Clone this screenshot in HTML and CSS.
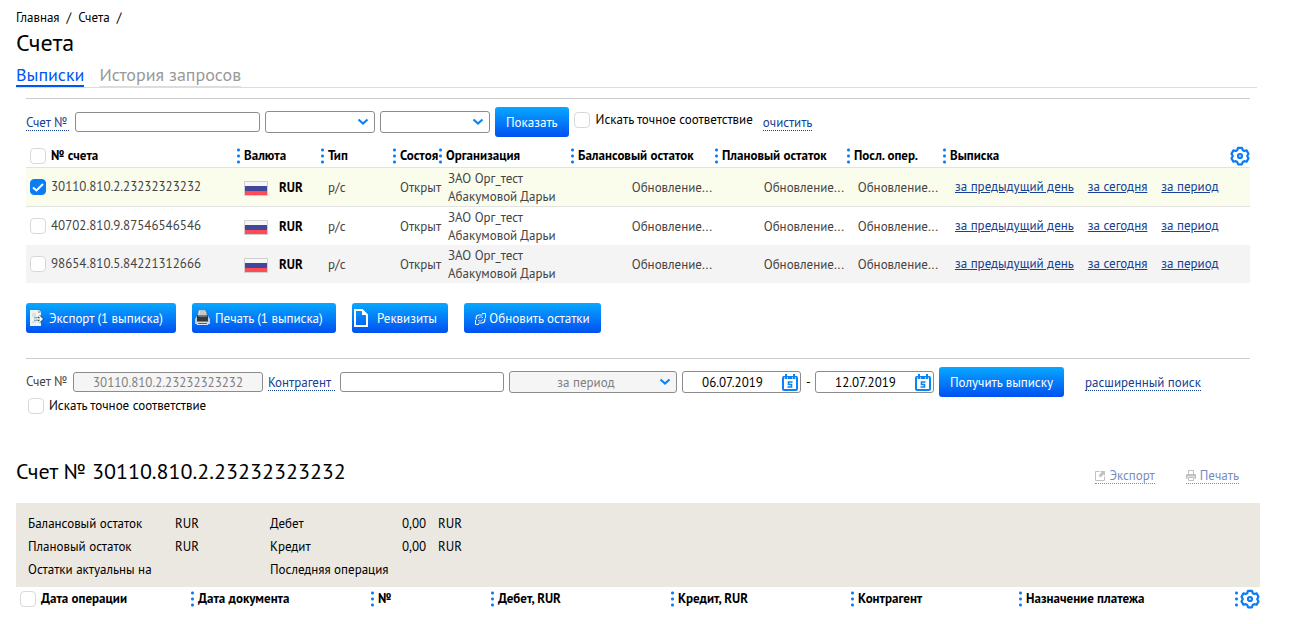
FILE: index.html
```html
<!DOCTYPE html>
<html lang="ru">
<head>
<meta charset="utf-8">
<title>Счета</title>
<link rel="stylesheet" href="styles.css">
</head>
<body>
<svg class="sprite" aria-hidden="true">
  <symbol id="gear" viewBox="0 0 20 20">
    <path d="M8 1.8h4l.7 2.3 1.5.9 2.4-.6 1.9 3.3-1.3 2.3 1.3 2.4-1.9 3.3-2.4-.6-1.5.9-.7 2.3H8l-.7-2.3-1.5-.9-2.4.6-1.9-3.3L2.8 10 1.500 7.700l1.9-3.3 2.400.6 1.500-.9z" fill="none" stroke="#0a7cf5" stroke-width="2.200" stroke-linejoin="round"/>
    <circle cx="10" cy="10" r="2" fill="none" stroke="#0a7cf5" stroke-width="2.200"/>
  </symbol>
  <symbol id="flag" viewBox="0 0 24 15">
    <rect width="24" height="15" rx="1" fill="#cfcfcf"/>
    <path d="M1 1h22v4H1z" fill="#f6f6f6"/><path d="M1 5h22v5H1z" fill="#41479b"/><path d="M1 10h22v4H1z" fill="#ff4b55"/>
  </symbol>
  <symbol id="calendar" viewBox="0 0 16 17">
    <rect x="1" y="3" width="14" height="13" rx="1" fill="#fff" stroke="#0a84f5" stroke-width="2"/>
    <path d="M1 2h14v3H1z" fill="#0a84f5"/>
    <path d="M4 0v5M12 0v5" stroke="#0a84f5" stroke-width="2"/>
    <path d="M2.500 3v2.500h3V3M10.500 3v2.500h3V3" stroke="#fff" stroke-width=".6" fill="none"/>
    <path d="M10.500 8H6.500v2.500h3V13H5.500" fill="none" stroke="#0a84f5" stroke-width="1.600"/>
  </symbol>
</svg>

<main class="page">
  <nav class="crumbs"><a href="#">Главная</a><span>/</span><a href="#">Счета</a><span>/</span></nav>
  <h1 class="title title-main">Счета</h1>
  <nav class="tabs">
    <a class="tab tab-active" href="#">Выписки</a>
    <a class="tab" href="#">История запросов</a>
  </nav>

  <section class="section">
    <form class="filter">
      <label class="hint label-account" for="account">Счет №</label>
      <input class="field field-account" id="account" type="text">
      <select class="select select-short" aria-label="Валюта"><option></option></select>
      <select class="select select-short" aria-label="Состояние"><option></option></select>
      <button class="button" type="button">Показать</button>
      <label class="check-label"><input class="check" type="checkbox">Искать точное соответствие</label>
      <a class="hint" href="#">очистить</a>
    </form>

    <table class="grid accounts">
      <colgroup>
        <col class="w210"><col class="w84"><col class="w72"><col class="w46"><col class="w132"><col class="w144"><col class="w132"><col class="w96"><col>
      </colgroup>
      <thead>
        <tr>
          <th><div class="head head-first"><input class="check" type="checkbox" aria-label="Выбрать все">№ счета</div></th>
          <th><div class="head dots">Валюта</div></th>
          <th><div class="head dots">Тип</div></th>
          <th><div class="head dots">Состоя</div></th>
          <th><div class="head dots">Организация</div></th>
          <th><div class="head dots">Балансовый остаток</div></th>
          <th><div class="head dots">Плановый остаток</div></th>
          <th><div class="head dots">Посл. опер.</div></th>
          <th><div class="head dots">Выписка<button class="icon-button" type="button" aria-label="Настройка"><svg width="20" height="20"><use href="#gear"/></svg></button></div></th>
        </tr>
      </thead>
      <tbody>
        <tr class="selected">
          <td><label class="account"><input class="check" type="checkbox" checked>30110.810.2.23232323232</label></td>
          <td><div class="currency"><svg width="24" height="15"><use href="#flag"/></svg>RUR</div></td>
          <td class="kind">р/с</td><td class="kind">Открыт</td>
          <td class="org">ЗАО Орг_тест Абакумовой Дарьи</td>
          <td class="amount">Обновление...</td><td class="amount">Обновление...</td><td class="amount amount-last">Обновление...</td>
          <td><div class="links"><a href="#">за предыдущий день</a><a href="#">за сегодня</a><a href="#">за период</a></div></td>
        </tr>
        <tr>
          <td><label class="account"><input class="check" type="checkbox">40702.810.9.87546546546</label></td>
          <td><div class="currency"><svg width="24" height="15"><use href="#flag"/></svg>RUR</div></td>
          <td class="kind">р/с</td><td class="kind">Открыт</td>
          <td class="org">ЗАО Орг_тест Абакумовой Дарьи</td>
          <td class="amount">Обновление...</td><td class="amount">Обновление...</td><td class="amount amount-last">Обновление...</td>
          <td><div class="links"><a href="#">за предыдущий день</a><a href="#">за сегодня</a><a href="#">за период</a></div></td>
        </tr>
        <tr class="striped">
          <td><label class="account"><input class="check" type="checkbox">98654.810.5.84221312666</label></td>
          <td><div class="currency"><svg width="24" height="15"><use href="#flag"/></svg>RUR</div></td>
          <td class="kind">р/с</td><td class="kind">Открыт</td>
          <td class="org">ЗАО Орг_тест Абакумовой Дарьи</td>
          <td class="amount">Обновление...</td><td class="amount">Обновление...</td><td class="amount amount-last">Обновление...</td>
          <td><div class="links"><a href="#">за предыдущий день</a><a href="#">за сегодня</a><a href="#">за период</a></div></td>
        </tr>
      </tbody>
    </table>

    <div class="actions">
      <button class="button action w150" type="button">
        <svg width="16" height="16" viewBox="0 0 16 16"><path d="M1 0h9l2 2v14H1z" fill="#eef4f2"/><path d="M9 0v3h3z" fill="#9fb4ba"/><path d="M3 4h4M3 6h4M3 12h4" stroke="#c4d0d0"/><path d="M5 9h8M10 6l3 3-3 3" fill="none" stroke="#2f5a74" stroke-width="3"/><path d="M5 9h8M10 6l3 3-3 3" fill="none" stroke="#fff" stroke-width="1.400"/></svg>
        Экспорт (1 выписка)</button>
      <button class="button action w144" type="button">
        <svg width="16" height="16" viewBox="0 0 16 16"><path d="M3.500 0h7l2 6h-10z" fill="#e6eef2" stroke="#56616a" stroke-width=".6"/><path d="M5 2h5M4.500 4h7" stroke="#97a5ad"/><path d="M2 6h11l2 3v5H0V9z" fill="#c2ccd1"/><path d="M2 5.500h11v6H2z" fill="#33383d"/><path d="M3.500 6.500h8" stroke="#6a737a"/><path d="M1 12.500h13l-1 2.500H2z" fill="#dde4e7"/><path d="M3 13.500h9" stroke="#59636a"/></svg>
        Печать (1 выписка)</button>
      <button class="button action action-wide w96" type="button">
        <svg width="16" height="20" viewBox="0 0 16 20"><path d="M2 2h7l5 5v11H2z" fill="none" stroke="#fff" stroke-width="2"/><path d="M9 1v6h6z" fill="#fff"/></svg>
        Реквизиты</button>
      <button class="button action action-center w137" type="button">
        <svg width="11" height="12" viewBox="0 0 11 12"><path d="M1.200 6.500V5q0-3 3-3h3.300M9.800 5.500V7q0 3-3 3H3.500" fill="none" stroke="#f5f0e8" stroke-width="1.200"/><path d="M3.500 5.500q.5-1.500 2-1.500h1.500l1 1M7.500 6.500q-.5 1.500-2 1.500H4L3 7" fill="none" stroke="#f5f0e8" stroke-width=".8"/><path d="M7 .5h3.500V5M4 11.500H.5V7" fill="none" stroke="#f5f0e8"/></svg>
        Обновить остатки</button>
    </div>
  </section>

  <section class="section section-search">
    <form class="filter">
      <label class="label-account plain" for="account2">Счет №</label>
      <input class="field field-number" id="account2" type="text" value="30110.810.2.23232323232" disabled>
      <label class="hint label-party" for="party">Контрагент</label>
      <input class="field field-party" id="party" type="text">
      <select class="select select-period" aria-label="Период" disabled><option>за период</option></select>
      <div class="date"><input type="text" value="06.07.2019" aria-label="Дата с"><button class="icon-button" type="button" aria-label="Выбрать дату начала"><svg width="16" height="17"><use href="#calendar"/></svg></button></div>
      <span class="dash">-</span>
      <div class="date"><input type="text" value="12.07.2019" aria-label="Дата по"><button class="icon-button" type="button" aria-label="Выбрать дату окончания"><svg width="16" height="17"><use href="#calendar"/></svg></button></div>
      <button class="button" type="button">Получить выписку</button>
      <a class="hint advanced" href="#">расширенный поиск</a>
    </form>
    <label class="check-label exact"><input class="check" type="checkbox">Искать точное соответствие</label>
  </section>

  <header class="statement">
    <h2 class="title">Счет № 30110.810.2.23232323232</h2>
    <div class="tools">
      <a class="hint" href="#"><svg width="10" height="10" viewBox="0 0 10 10"><path d="M4.500.5h-4v9h9v-4" fill="none" stroke="#999"/><path d="M5 0h5v5L8.500 3.500 5.500 6.500 3.500 4.500 6.500 1.500z" fill="#999"/></svg>Экспорт</a>
      <a class="hint" href="#"><svg width="10" height="11" viewBox="0 0 10 11"><path d="M2.500 4V.5h5V4M2.500 7.500h5v3h-5z" fill="none" stroke="#999"/><path d="M0 5q0-1 1-1h8q1 0 1 1v4H8.500V6.500h-7V9H0z" fill="#999"/></svg>Печать</a>
    </div>
  </header>

  <section class="summary">
    <table class="totals">
      <colgroup><col class="w147"><col class="w95"><col class="w132"><col class="w36"><col class="w36"></colgroup>
      <tr><td>Балансовый остаток</td><td>RUR</td><td>Дебет</td><td>0,00</td><td>RUR</td></tr>
      <tr><td>Плановый остаток</td><td>RUR</td><td>Кредит</td><td>0,00</td><td>RUR</td></tr>
      <tr><td>Остатки актуальны на</td><td></td><td>Последняя операция</td><td></td><td></td></tr>
    </table>
  </section>

  <table class="grid operations">
    <colgroup><col class="w174"><col class="w180"><col class="w120"><col class="w180"><col class="w180"><col class="w168"><col><col class="w26"></colgroup>
    <thead>
      <tr>
        <th><div class="head head-first"><input class="check" type="checkbox" aria-label="Выбрать все операции">Дата операции</div></th>
        <th><div class="head dots">Дата документа</div></th>
        <th><div class="head dots">№</div></th>
        <th><div class="head dots">Дебет, RUR</div></th>
        <th><div class="head dots">Кредит, RUR</div></th>
        <th><div class="head dots">Контрагент</div></th>
        <th><div class="head dots">Назначение платежа</div></th>
        <th><div class="head dots dots-tight"><button class="icon-button" type="button" aria-label="Настройка столбцов"><svg width="20" height="20"><use href="#gear"/></svg></button></div></th>
      </tr>
    </thead>
  </table>
</main>
</body>
</html>
```
FILE: styles.css
```css
* { box-sizing: border-box; }

body {
  margin: 0;
  background: #fff;
  color: #000;
  font: 13px/18px "PT Sans", "Noto Sans", sans-serif;
}

input, select, button { font: inherit; margin: 0; }
svg { display: block; flex: none; }
.sprite { position: absolute; width: 0; height: 0; }

.page { padding: 8px 35px 14px 16px; }

.crumbs { display: flex; gap: 7px; line-height: 20px; }
.crumbs a { color: #000; text-decoration: none; }

.title { margin: 0; font-size: 22px; line-height: 32px; font-weight: 400; }
.title-main { font-size: 24px; line-height: 30px; }

.tabs {
  display: flex;
  gap: 15px;
  margin-right: 3px;
  padding-top: 7px;
  border-bottom: 1px solid #ddd;
}
.tab { color: #999; font-size: 18px; line-height: 20px; text-decoration: none; border-bottom: 1px solid #ddd; }
.tab-active { color: #0055f5; border-bottom: 2px solid #0055f5; }

.section { margin: 10px 10px 0; border-top: 1px solid #ccc; }

.filter { display: flex; align-items: center; gap: 5px; padding-top: 8px; }
.label-account { width: 43px; white-space: nowrap; }
.label-party { width: 67px; }
.plain { width: 42px; color: #444; }
.hint { padding-top: 2px; color: #164194; text-decoration: none; border-bottom: 1px dotted #164194; line-height: 14px; white-space: nowrap; }

.field, .select, .date {
  height: 22px;
  border: 1px solid #8c8c8c;
  border-radius: 3px;
  background-color: #fff;
}
.field { height: 20px; padding: 0 8px; }
.field:disabled, .select:disabled { background-color: #f5f5f5; color: #808080; opacity: 1; text-align: center; text-align-last: center; }
.field-account { width: 185px; margin-left: 1px; }
.field-number { width: 190px; }
.field-party { width: 164px; }
.select {
  appearance: none;
  padding: 2px 18px 0 4px;
  background-image: url("data:image/svg+xml,%3Csvg xmlns='http://www.w3.org/2000/svg' width='12' height='8'%3E%3Cpath d='M1.500 1.500 6 5.500l4.500-4' fill='none' stroke='%230a84f5' stroke-width='2.200'/%3E%3C/svg%3E");
  background-repeat: no-repeat;
  background-position: right 5px center;
}
.select-short { width: 110px; }
.select-period { width: 168px; }

.date { display: flex; align-items: center; width: 119px; padding-right: 2px; }
.date input { flex: 1; min-width: 0; padding: 2px 0 0; border: 0; background: none; text-align: center; }
.dash { width: 4px; }

.button {
  height: 30px;
  padding: 2px 11px 0;
  border: 0;
  border-radius: 3px;
  background: linear-gradient(#08a8ff, #0050f0);
  color: #fff;
  white-space: nowrap;
}
.icon-button { padding: 0; border: 0; background: none; }

.check {
  appearance: none;
  flex: none;
  width: 16px;
  height: 16px;
  border: 1px solid #d9d9d9;
  border-radius: 4px;
  background: #fff;
}
.check:checked {
  border-color: #0a7cf5;
  background: #0a7cf5 url("data:image/svg+xml,%3Csvg xmlns='http://www.w3.org/2000/svg' width='14' height='14'%3E%3Cpath d='M2 7.500 5.500 10.500 12 4' fill='none' stroke='white' stroke-width='2'/%3E%3C/svg%3E") center no-repeat;
}
.check-label { display: flex; align-items: center; gap: 6px; padding: 0 5px 4px 0; white-space: nowrap; }
.exact { width: max-content; padding: 0 0 0 2px; gap: 5px; }

.grid { width: 100%; table-layout: fixed; border-collapse: collapse; }
.grid th, .grid td { padding: 0; }
.head { display: flex; align-items: center; height: 24px; padding-top: 2px; overflow: hidden; white-space: nowrap; }
.head-first { padding-left: 4px; gap: 5px; }
.head .icon-button { margin-left: auto; }
.dots::before {
  content: "";
  flex: none;
  width: 3px;
  height: 18px;
  margin: 0 4px 0 1px;
  background: radial-gradient(circle, #0a7cf5 1px, transparent 2px) 0 0 / 3px 6px repeat-y;
}
.dots-tight::before { margin-right: 0; }

.accounts { margin-top: 6px; color: #444; }
.accounts thead { color: #000; }
.accounts tbody tr { height: 38px; }
.accounts tbody .selected { height: 39px; border-top: 1px solid #e2e2e2; border-bottom: 1px solid #e2e2e2; background: #fbfdec; }
.striped { background: #f4f4f4; }
.account { display: flex; align-items: center; gap: 5px; padding-left: 4px; }
.currency { display: flex; align-items: center; gap: 11px; padding: 2px 0 0 8px; color: #000; font-weight: 700; }
.accounts .kind { padding: 2px 0 0 8px; white-space: nowrap; }
.accounts .org { padding: 2px 0 0 10px; }
.accounts .amount { padding: 2px 2px 0 0; text-align: right; }
.accounts .amount-last { padding-right: 4px; }
.links { display: flex; gap: 14px; padding-left: 13px; white-space: nowrap; }
.links a { color: #164194; }

.actions { display: flex; gap: 16px; padding: 20px 0 15px; }
.action { display: flex; align-items: center; gap: 4px; padding: 2px 3px 0; }
.action svg { margin-bottom: 2px; }
.action-wide { gap: 8px; padding-left: 1px; }
.action-center { justify-content: center; gap: 3px; }
.action-center svg { margin-bottom: 0; }

.filter .advanced { margin-left: 16px; }

.statement { display: flex; align-items: center; justify-content: space-between; padding: 40px 21px 16px 0; }
.tools { display: flex; gap: 31px; opacity: .6; padding-top: 8px; }
.tools a { display: flex; align-items: center; gap: 4px; }

.summary { padding: 9px 12px 6px; background: #ebe8e1; }
.totals { table-layout: fixed; width: 446px; border-collapse: collapse; }
.totals td { padding: 0; height: 23px; white-space: nowrap; }

.operations .head { height: 22px; }

.w26 { width: 26px; }
.w36 { width: 36px; }
.w46 { width: 46px; }
.w72 { width: 72px; }
.w84 { width: 84px; }
.w95 { width: 95px; }
.w96 { width: 96px; }
.w120 { width: 120px; }
.w132 { width: 132px; }
.w137 { width: 137px; }
.w144 { width: 144px; }
.w147 { width: 147px; }
.w150 { width: 150px; }
.w168 { width: 168px; }
.w174 { width: 174px; }
.w180 { width: 180px; }
.w210 { width: 210px; }
```
